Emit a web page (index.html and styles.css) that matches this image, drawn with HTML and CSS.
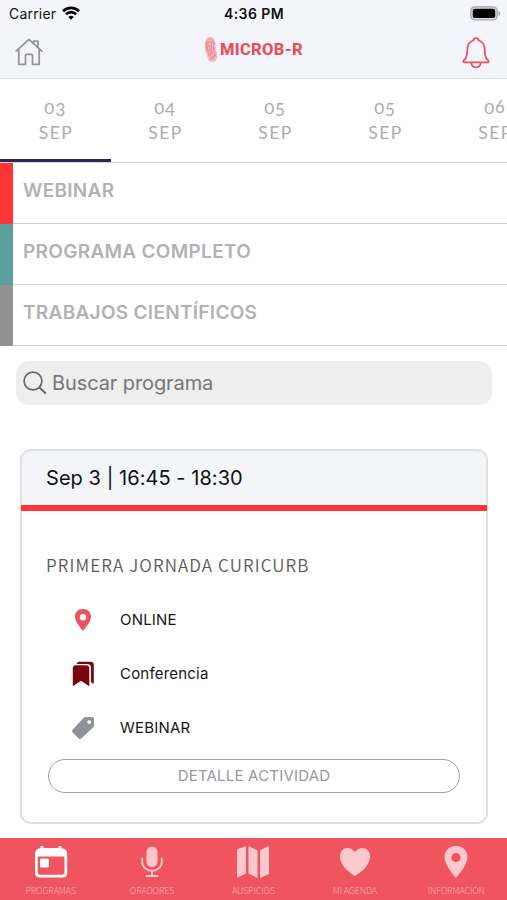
FILE: index.html
```html
<!DOCTYPE html>
<html lang="es">
<head>
<meta charset="utf-8">
<meta name="viewport" content="width=device-width, initial-scale=1">
<title>Microb-R</title>
<link rel="stylesheet" href="styles.css">
</head>
<body>
<div class="app">
  <header class="header">
    <div class="status">
      <div class="carrier"><span>Carrier</span>
        <svg width="18" height="14" viewBox="0 0 18 14" fill="none" stroke="#050505" stroke-width="2.7"><path d="M1 5.2a11.4 11.4 0 0 1 16 0M3.9 8.3a7.2 7.2 0 0 1 10.2 0"/><path d="M9 13.8 6.3 11a3.9 3.9 0 0 1 5.4 0z" fill="#050505" stroke="none"/></svg>
      </div>
      <div class="time">4:36 PM</div>
      <svg class="battery" width="31" height="15" viewBox="0 0 31 15"><rect x=".8" y=".8" width="26.4" height="13.2" rx="4" fill="#d7d7da" stroke="#a5a5a8" stroke-width="1.2"/><rect x="2.8" y="2.7" width="22.4" height="9.4" rx="2" fill="#000"/><path d="M28.5 5v5q1.8-.8 1.8-2.5T28.500 5" fill="#a5a5a8"/></svg>
    </div>
    <div class="bar">
      <svg class="home" width="28" height="28" viewBox="0 0 28 28" fill="none" stroke="#939396" stroke-width="1.7" stroke-linejoin="round" stroke-linecap="round"><path d="M1.200 13.200 14 1.400l12.800 11.800M3.800 11.300V26.300H10.500V17.500q0-1.200 1.200-1.200h4.600q1.200 0 1.200 1.200V26.300H24.200V11.300M18.700 5.500V3h4.200v6.500"/></svg>
      <div class="logo">
        <svg width="14" height="27" viewBox="0 0 14 27"><path d="M6 .8C10 .5 12 5 11.800 11c-.1 4 1.700 5 1.500 9-.2 4-2 6-5 6-4 0-4.300-4-5.500-7C1.500 16 .5 14 .8 9 1.100 4 3 1 6 .8z" fill="#f4bac2"/><g fill="none" stroke="#e9747f" stroke-width=".65"><path d="M3 14C1 7 4 2.500 6.400 3c3.500.8 3.300 6 3.100 9 0 4 2.200 5 1.500 9M5 19C2 11 4 6 6 5.500c2.500 1 1.500 6 1.500 8 .2 4 2 5 1.500 10M6.800 22c0-5-1.800-8-1-13"/><path d="m2 8 3-3M2 12l4-3M3 16l4-3M4 20l5-4M6 24l6-5M7 5l4 3M7 10l4 3"/></g></svg>
        <span>MICROB-R</span>
      </div>
      <svg class="bell" width="28" height="32" viewBox="0 0 28 32" fill="none" stroke="#ed4f5f" stroke-width="1.800" stroke-linejoin="round"><path d="M14 1.200c-1.500 0-2.500 1-2.700 2.300C7.200 4.700 5.300 8.300 5.300 12.500c0 5.500-.7 8.500-2.800 10.200-1.700 1.500-1.500 2.600 0 2.600h23c1.500 0 1.700-1.100 0-2.600-2.100-1.700-2.800-4.700-2.800-10.200 0-4.200-1.900-7.800-6-9C16.500 2.200 15.500 1.200 14 1.200zM9.300 25.500c.2 3 2 4.800 4.700 4.800s4.500-1.800 4.700-4.800"/></svg>
    </div>
  </header>
  <nav class="days">
    <div class="day active"><div class="num"><span class="zero">0</span><span class="low">3</span></div><div class="month">SEP</div></div>
    <div class="day"><div class="num"><span class="zero">0</span><span class="low">4</span></div><div class="month">SEP</div></div>
    <div class="day"><div class="num"><span class="zero">0</span><span class="low">5</span></div><div class="month">SEP</div></div>
    <div class="day"><div class="num"><span class="zero">0</span><span class="low">5</span></div><div class="month">SEP</div></div>
    <div class="day"><div class="num"><span class="zero">0</span><span class="high">6</span></div><div class="month">SEP</div></div>
  </nav>
  <div class="cat red">WEBINAR</div>
  <div class="cat teal">PROGRAMA COMPLETO</div>
  <div class="cat gray">TRABAJOS CIENTÍFICOS</div>
  <div class="search">
    <svg width="24" height="24" viewBox="0 0 24 24" fill="none" stroke="#68686b" stroke-width="1.700"><circle cx="10" cy="10" r="8.900"/><path d="m16.200 16.200 6.600 6.300" stroke-width="2"/></svg>
    <span>Buscar programa</span>
  </div>
  <main class="card">
    <div class="when">Sep 3 | 16:45 - 18:30</div>
    <div class="body">
      <h2 class="title">PRIMERA JORNADA CURICURB</h2>
      <div class="info"><svg width="26" height="26" viewBox="0 0 26 26"><path fill="#ed5160" fill-rule="evenodd" d="M13 2C8.400 2 5 5.200 5 9.500 5 15 11 21 13 24c2-3 8-9 8-14.500C21 5.200 17.600 2 13 2zm0 5a3.200 3.200 0 1 1 0 6.400A3.200 3.200 0 0 1 13 7z"/></svg><span>ONLINE</span></div>
      <div class="info"><svg width="26" height="26" viewBox="0 0 26 26" fill="#79060e"><path d="M5.500 4.200h10.800a3 3 0 0 1 3 3V25.200L11 19.800 2.800 25.200V7.200a3 3 0 0 1 2.700-3z"/><path d="M6.500 3A2.800 2.800 0 0 1 9 .7h11.800a3 3 0 0 1 3 3V22.800l-2.800-1.600V7a4 4 0 0 0-4-4z"/></svg><span>Conferencia</span></div>
      <div class="info"><svg width="26" height="26" viewBox="0 0 26 26"><path fill="#909299" fill-rule="evenodd" d="M16 2h6.200Q24 2 24 4v6.500q0 1.200-1 2.100L11.500 23.300q-1.600 1.500-3.100 0l-5.700-5.700q-1.500-1.500 0-3.100L13.500 3q1-1 2.500-1zm3.200 3.200a1.900 1.900 0 1 0 0 3.800 1.900 1.900 0 0 0 0-3.800z"/></svg><span>WEBINAR</span></div>
      <button class="detail">DETALLE ACTIVIDAD</button>
    </div>
  </main>
  <footer class="tabs">
    <div class="tab on"><svg width="34" height="34" viewBox="0 0 34 34"><path fill="#fff" fill-rule="evenodd" d="M6.500 1h3v2h15V1h3v2.200Q33.200 3.500 33.200 9v18.500q0 5-5 5H6q-5 0-5-5V9q0-5.500 5.500-5.800zM3.700 11.500v15.500q0 2.800 2.800 2.800h21.200q2.800 0 2.800-2.800V11.500z"/><rect x="6" y="13.500" width="9" height="9" rx="1.500" fill="#fff"/></svg><span>PROGRAMAS</span></div>
    <div class="tab"><svg width="34" height="34" viewBox="0 0 34 34"><rect x="11.500" y="1.500" width="11" height="20.500" rx="5.500" fill="#fbc6cb"/><path d="M7.200 13.500v3c0 5.500 4 9.300 9.800 9.300s9.800-3.800 9.800-9.300v-3M17 26v5M11.500 31h11" fill="none" stroke="#fbcdd1" stroke-width="1.800" stroke-linecap="round"/></svg><span>ORADORES</span></div>
    <div class="tab"><svg width="34" height="34" viewBox="0 0 34 34" fill="#fbc9cd"><path d="M2.500 3.800 10 1v27.500L2.800 32q-1.800.7-1.800-1V6q0-1.700 1.500-2.200zM12.500 1l9 4.500V33l-9-4.500zM24 5.500l7.500-4.200q1.500-.6 1.500 1V28q0 1-1 1.600L24 33z"/></svg><span>AUSPICIOS</span></div>
    <div class="tab"><svg width="34" height="34" viewBox="0 0 34 34"><path fill="#fbc9cd" d="M17 31C14.500 29.500 2 22 2 11.500 2 6 5.500 3 9.500 3c3.200 0 6 1.700 7.500 4.300C18.500 4.700 21.300 3 24.500 3c4 0 7.500 3 7.500 8.500C32 22 19.500 29.500 17 31z"/></svg><span>MI AGENDA</span></div>
    <div class="tab"><svg width="34" height="34" viewBox="0 0 34 34"><path fill="#fbc9cd" fill-rule="evenodd" d="M17 1C10.500 1 5.500 5.600 5.500 11.700 5.500 19.500 13.500 28.500 17 33c3.500-4.500 11.500-13.500 11.500-21.300C28.500 5.600 23.500 1 17 1zm0 7a4.600 4.600 0 1 1 0 9.200A4.600 4.600 0 0 1 17 8z"/></svg><span>INFORMACIÓN</span></div>
  </footer>
</div>
</body>
</html>
```
FILE: styles.css
```css
* { box-sizing: border-box; }
body { margin: 0; background: #fff; font-family: Inter, "Liberation Sans", sans-serif; }
svg { display: block; flex: none; }
.app { width: 507px; height: 900px; overflow: hidden; display: flex; flex-direction: column; }
.header { height: 79px; flex: none; background: #f4f5fa; border-bottom: 1px solid #dfe2e7; }
.status { height: 28px; display: grid; grid-template-columns: 1fr auto 1fr; align-items: center; padding: 0 6px 0 9px; color: #111; font-size: 14px; }
.carrier { display: flex; align-items: center; gap: 6px; letter-spacing: .2px; margin-top: -1px; }
.carrier svg { margin-top: -1px; }
.time { font-weight: 600; font-size: 14px; letter-spacing: .4px; margin: -1px 2px 0 0; }
.battery { justify-self: end; margin-top: -1px; }
.bar { height: 50px; display: grid; grid-template-columns: 1fr auto 1fr; padding: 0 16px 0 15px; align-items: start; }
.home { margin-top: 10px; }
.logo { display: flex; align-items: center; height: 27px; margin: 8px 0 0 1px; gap: 2px; color: #e94e5c; font: 800 16.500px/20px Roboto, sans-serif; }
.logo span { letter-spacing: .35px; }
.bell { justify-self: end; margin: 9px 1px 0 0; }
.days { height: 84px; flex: none; display: flex; border-bottom: 1px solid #d2d2d2; }
.day { width: 110px; flex: none; padding-top: 15px; text-align: center; color: #acacac; font: 17px/26px Lato, sans-serif; letter-spacing: .6px; }
.day.active { width: 111px; margin-right: -1px; border-bottom: 3px solid #2e265a; }
.num { height: 26px; }
.zero { font-size: 15px; display: inline-block; transform: translateY(.5px) scale(1.15, 1); }
.low { display: inline-block; margin-left: 1px; transform: translateY(2.500px); }
.high { margin-left: 1px; }
.month { font-size: 17.500px; letter-spacing: 1.400px; padding-left: 1px; }
.cat { height: 61px; flex: none; border-bottom: 1px solid #cfcfcf; padding: 0 0 0 11px; display: flex; align-items: flex-start; line-height: 56px; color: #b2b2b2; font-size: 19px; font-weight: 600; letter-spacing: .3px; }
.cat::before { content: ""; width: 13px; height: 61px; margin: 0 10px 0 -11px; flex: none; }
.red::before { background: #ff3434; }
.teal::before { background: #5c9f9f; }
.gray::before { background: #929292; }
.search { height: 44px; flex: none; margin: 15px 15px 0 16px; border-radius: 13px; background: #eee; color: #777; display: flex; align-items: center; padding-left: 7px; gap: 5px; font-size: 20px; letter-spacing: -.1px; }
.card { width: 468px; height: 375px; flex: none; margin: 44px 0 0 20px; border: 2px solid #e0e0e0; border-radius: 11px; }
.when { height: 59.500px; margin: 0 -1px; border-radius: 9px 9px 0 0; background: #f3f5f9 content-box; background-clip: border-box; border-bottom: 6px solid #ff3434; border-bottom-left-radius: 0; padding: 0 0 0 25px; line-height: 55px; font-size: 20px; color: #111; letter-spacing: .05px; box-shadow: inset 1px 0 #e0e0e0, inset -1px 0 #e0e0e0; }
.body { padding: 39px 26px 0; }
.title { margin: 0 -2px 27px -2px; font: 350 17px/30px "Noto Sans CJK SC", sans-serif; letter-spacing: 1.100px; color: #5a5a5a; white-space: nowrap; }
.info { display: flex; align-items: center; height: 26px; margin: 0 0 28px 22px; gap: 24px; font-size: 15px; color: #151515; }
.info span { letter-spacing: .2px; }
.detail { display: block; width: 412px; height: 34px; margin: -10px 0 0 0; padding: 0; border: 1.500px solid #a0a0a0; border-radius: 17px; background: #fff; color: #96999d; font: 15px/28px Inter, sans-serif; letter-spacing: .2px; }
.tabs { height: 62px; flex: none; margin-top: auto; background: #f0545f; display: grid; grid-template-columns: repeat(5, 101.400px); }
.tab { display: flex; flex-direction: column; align-items: center; padding-top: 7px; color: #f9b0b5; font: 300 9px/13px "Noto Sans CJK SC", sans-serif; letter-spacing: -.15px; gap: 5px; white-space: nowrap; }
```
